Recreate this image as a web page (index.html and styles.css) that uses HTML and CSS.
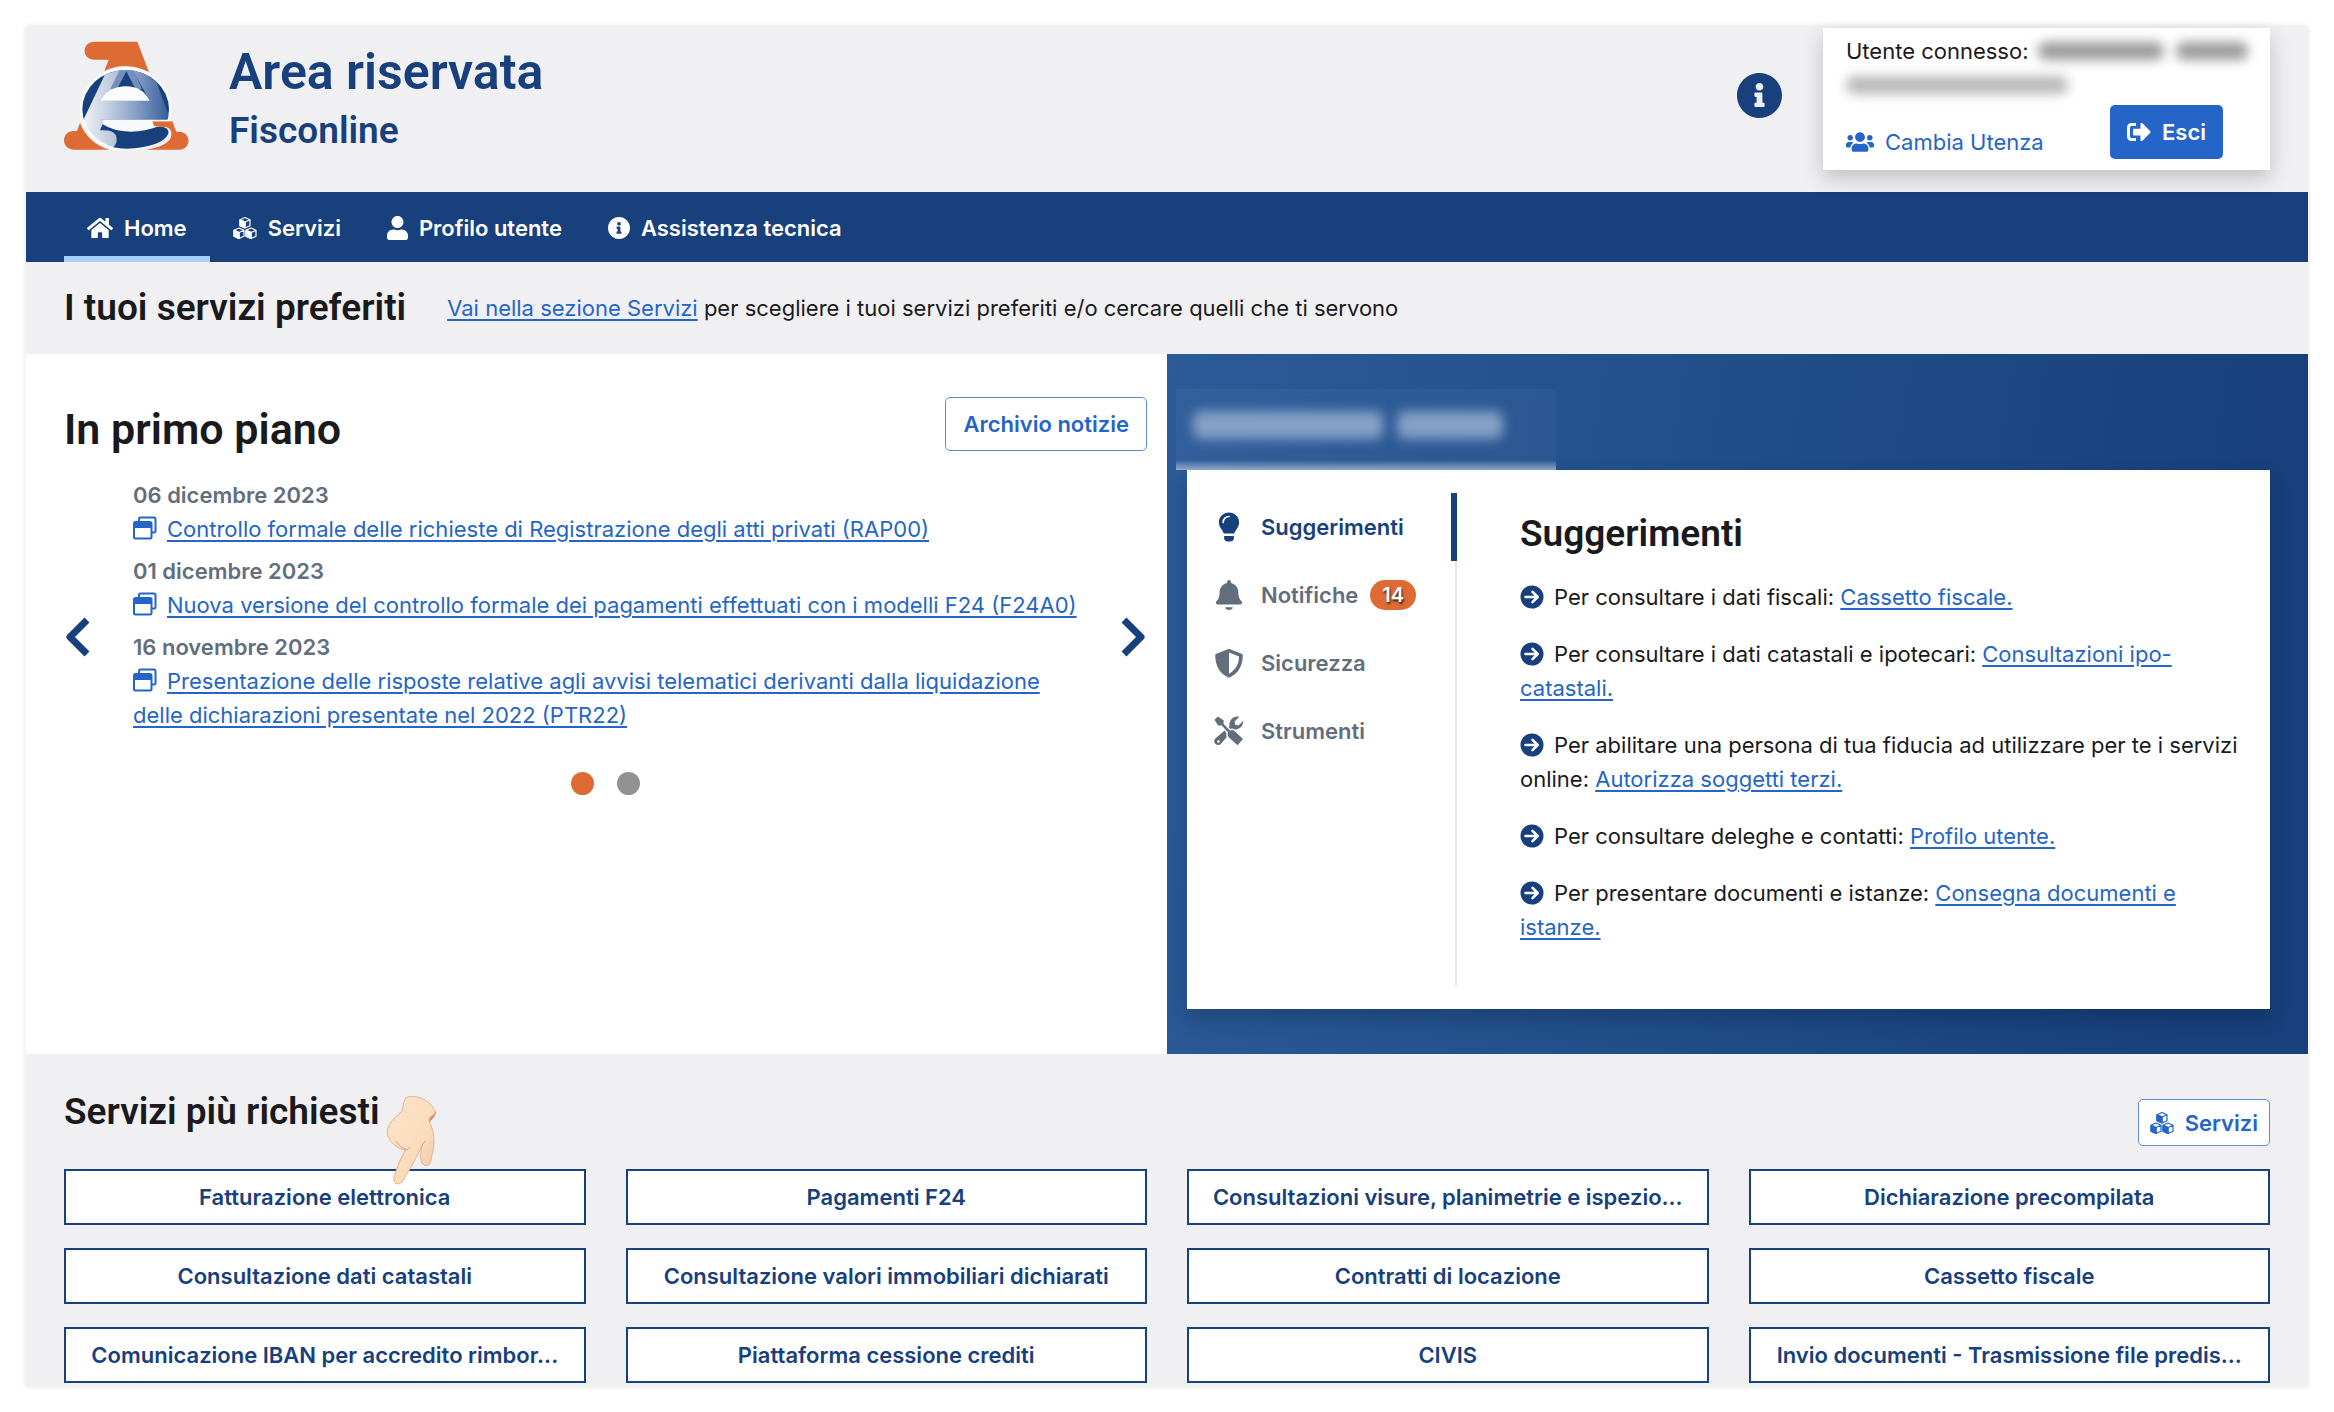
FILE: index.html
```html
<!DOCTYPE html>
<html lang="it">
<head>
<meta charset="utf-8">
<meta name="viewport" content="width=device-width, initial-scale=1">
<title>Area riservata - Fisconline</title>
<link rel="stylesheet" href="styles.css">
</head>
<body>
<svg class="sprite" aria-hidden="true">
  <symbol id="i-home" viewBox="0 0 576 512"><path d="M280.37 148.26L96 300.11V464a16 16 0 0 0 16 16l112.06-.29a16 16 0 0 0 15.92-16V368a16 16 0 0 1 16-16h64a16 16 0 0 1 16 16v95.64a16 16 0 0 0 16 16.05L464 480a16 16 0 0 0 16-16V300L295.67 148.26a12.19 12.19 0 0 0-15.3 0zM571.6 251.47L488 182.56V44.05a12 12 0 0 0-12-12h-56a12 12 0 0 0-12 12v72.61L318.47 43a48 48 0 0 0-61 0L4.34 251.47a12 12 0 0 0-1.6 16.9l25.5 31A12 12 0 0 0 45.15 301l235.22-193.74a12.19 12.19 0 0 1 15.3 0L530.9 301a12 12 0 0 0 16.9-1.6l25.5-31a12 12 0 0 0-1.7-16.93z"/></symbol>
  <symbol id="i-cubes" viewBox="0 0 48 46">
    <g id="cube" stroke="currentColor" stroke-width="2.4" stroke-linejoin="round">
      <path fill="none" d="M24 2l10 4.500v12l-10 4.500-10-4.500v-12zM14 6.500l10 4.500 10-4.500M24 11v12"/><path d="M14 6.500l10 4.500v12l-10-4.500z"/>
    </g>
    <use href="#cube" x="-12" y="21"/><use href="#cube" x="12" y="21"/>
  </symbol>
  <symbol id="i-user" viewBox="0 0 448 512"><path d="M224 256c70.7 0 128-57.3 128-128S294.7 0 224 0 96 57.3 96 128s57.3 128 128 128zm89.6 32h-16.7c-22.2 10.2-46.9 16-72.9 16s-50.6-5.8-72.9-16h-16.7C60.2 288 0 348.2 0 422.4V464c0 26.5 21.5 48 48 48h352c26.5 0 48-21.5 48-48v-41.6c0-74.2-60.2-134.4-134.4-134.4z"/></symbol>
  <symbol id="i-info" viewBox="8 8 496 496"><path d="M256 8C119.043 8 8 119.083 8 256c0 136.997 111.043 248 248 248s248-111.003 248-248C504 119.083 392.957 8 256 8zm0 110c23.196 0 42 18.804 42 42s-18.804 42-42 42-42-18.804-42-42 18.804-42 42-42zm56 254c0 6.627-5.373 12-12 12h-88c-6.627 0-12-5.373-12-12v-24c0-6.627 5.373-12 12-12h12v-64h-12c-6.627 0-12-5.373-12-12v-24c0-6.627 5.373-12 12-12h64c6.627 0 12 5.373 12 12v100h12c6.627 0 12 5.373 12 12v24z"/></symbol>
  <symbol id="i-users" viewBox="0 0 640 512"><path d="M96 224c35.3 0 64-28.7 64-64s-28.7-64-64-64-64 28.7-64 64 28.7 64 64 64zm448 0c35.3 0 64-28.7 64-64s-28.7-64-64-64-64 28.7-64 64 28.7 64 64 64zm32 32h-64c-17.6 0-33.5 7.1-45.1 18.6 40.3 22.1 68.9 62 75.1 109.4h66c17.7 0 32-14.3 32-32v-32c0-35.3-28.7-64-64-64zm-256 0c61.9 0 112-50.1 112-112S381.9 32 320 32 208 82.1 208 144s50.1 112 112 112zm76.8 32h-8.3c-20.8 10-43.9 16-68.5 16s-47.6-6-68.5-16h-8.3C179.6 288 128 339.6 128 403.2V432c0 26.5 21.5 48 48 48h288c26.5 0 48-21.5 48-48v-28.8c0-63.6-51.6-115.2-115.2-115.2zm-223.7-13.4C161.5 263.1 145.6 256 128 256H64c-35.3 0-64 28.7-64 64v32c0 17.7 14.3 32 32 32h65.9c6.3-47.4 34.9-87.3 75.2-109.4z"/></symbol>
  <symbol id="i-exit" viewBox="0 0 512 512"><path d="M497 273L329 441c-15 15-41 4.5-41-17v-96H152c-13.3 0-24-10.7-24-24v-96c0-13.3 10.7-24 24-24h136V88c0-21.4 25.900-32 41-17l168 168c9.300 9.400 9.300 24.600 0 34zM192 436v-40c0-6.600-5.400-12-12-12H96c-17.700 0-32-14.300-32-32V160c0-17.700 14.300-32 32-32h84c6.600 0 12-5.400 12-12V76c0-6.600-5.400-12-12-12H96c-53 0-96 43-96 96v192c0 53 43 96 96 96h84c6.600 0 12-5.400 12-12z"/></symbol>
  <symbol id="i-window" viewBox="0 0 24 24"><path fill="none" stroke="currentColor" stroke-width="2" stroke-linejoin="round" d="M6 5V3a1.500 1.500 0 0 1 1.500-1.500H21A1.500 1.500 0 0 1 22.500 3v12a1.500 1.500 0 0 1-1.500 1.500h-2M2.500 6H17a1.500 1.500 0 0 1 1.500 1.500V21a1.500 1.500 0 0 1-1.500 1.500H2.500A1.500 1.500 0 0 1 1 21V7.500A1.500 1.500 0 0 1 2.500 6z"/><path d="M1 6h17.500v6H1z"/></symbol>
  <symbol id="i-arrow" viewBox="0 0 24 24"><circle cx="12" cy="12" r="11.500"/><path fill="none" stroke="#fff" stroke-width="2.600" stroke-linecap="round" stroke-linejoin="round" d="M5.500 12h12M12.500 6.800l5.200 5.200-5.200 5.200"/></symbol>
  <symbol id="i-bulb" viewBox="0 0 32 32"><path d="M16 .5C9.800.5 5.200 5.200 5.200 11c0 3 1.200 5.200 2.800 7.400 1.200 1.700 2 3 2.300 4.600h11.400c.3-1.600 1.100-2.900 2.300-4.600 1.600-2.200 2.800-4.400 2.800-7.400C26.800 5.200 22.200.5 16 .5zM10.800 25.500h10.400v2a4 4 0 0 1-4 4h-2.400a4 4 0 0 1-4-4z"/><path fill="none" stroke="#fff" stroke-width="1.800" stroke-linecap="round" d="M9.800 11a6.200 6.200 0 0 1 6.200-6.200"/></symbol>
  <symbol id="i-bell" viewBox="0 0 448 512"><path d="M224 512c35.320 0 63.970-20 63.970-48H160.030c0 28 28.650 48 63.970 48zm215.390-149.710c-19.320-20.760-55.470-51.990-55.470-154.290 0-77.700-54.480-139.900-127.940-155.160V32c0-17.670-14.320-32-31.980-32s-31.980 14.330-31.980 32v20.840C118.560 68.100 64.080 130.300 64.080 208c0 102.300-36.150 133.530-55.470 154.290-6 6.450-8.660 14.160-8.610 21.710.110 16.400 12.980 32 32.100 32h383.800c19.120 0 32-15.600 32.100-32 .050-7.550-2.610-15.270-8.610-21.710z"/></symbol>
  <symbol id="i-shield" viewBox="0 0 32 32"><path fill-rule="evenodd" d="M16 .8l13.400 5.400c.8.300 1.300 1 1.300 1.900C30.700 18.500 26 27.500 16.800 31.400a2 2 0 0 1-1.600 0C6 27.500 1.300 18.500 1.300 8.100c0-.9.500-1.600 1.300-1.900zM16 4.800v22.600c6.400-3.200 10.500-9.700 10.700-18.300z"/></symbol>
  <symbol id="i-tools" viewBox="0 0 32 32">
    <path d="M27 .8l-5 5 .6 3.600 3.600.6 5-5A8.600 8.600 0 0 1 20.500 14L8 29a4.200 4.200 0 1 1-6-5.600L16.600 11A8.600 8.600 0 0 1 27 .8z"/>
    <path stroke="#fff" stroke-width="1.600" d="M-.5 4L4-.5l7 4.500v4.200l6.400 6.400c2-.8 3.800-.4 5.400 1.200l9.200 8.800-6.800 7.600-9.800-8.800c-1.600-1.600-2-3.600-1.200-5.600L8 11H4z"/>
    <circle cx="4.800" cy="27.200" r="1.300" fill="#fff"/>
  </symbol>
</svg>

<div class="page">
  <header class="header">
    <a class="logo" href="#" aria-label="Agenzia delle Entrate">
      <svg viewBox="42 32 375 328" aria-hidden="true">
        <defs>
          <linearGradient id="leg"><stop offset="0" stop-color="#f4f6fa"/><stop offset=".55" stop-color="#c3cee0"/><stop offset="1" stop-color="#93a9cb"/></linearGradient>
          <linearGradient id="bar"><stop offset="0" stop-color="#dce3ee"/><stop offset=".5" stop-color="#8da3c8"/><stop offset="1" stop-color="#315b98"/></linearGradient>
          <clipPath id="disc"><ellipse cx="227" cy="237" rx="130" ry="118"/></clipPath>
        </defs>
        <g fill="#dd6b33">
          <path d="M262 34H134C94 34 94 88 134 88h42l-13 34q65-32 134 3z"/>
          <path d="M90 278l-9 24h-9c-40 0-40 56 0 56h106Q115 340 90 278z"/>
        </g>
        <ellipse cx="227" cy="237" rx="137" ry="126" fill="#fbfcfd"/>
        <path fill="#dd6b33" d="M306 273h61l12 31h8c38 0 38 54 0 54H288q62-10 74-35 8-25-12-32l-38-3z"/>
        <g clip-path="url(#disc)">
          <path fill="#17407c" d="M90 110h275v158H90z"/>
          <path fill="url(#bar)" d="M243 110h60l58 158H140v-58h158z"/>
          <path fill="url(#leg)" d="M166 130l20-20h60l-46 70-40 32h-8v56h10l-4 32q46 0 46 34 0 14-14 24H90V290z"/>
          <path fill="#7390bd" d="M214 110h32l30 66-95 0z"/>
          <path fill="#17407c" d="M229 123l26 50h-52z"/>
        </g>
        <path fill="#fbfcfd" d="M152 211q24-43 76-43 50 0 71 43z"/>
        <path fill="#f7f8fa" d="M160 268h200v5h-54l8 18q-40 14-76 14-30 0-50-12-16-7-28-7z"/>
        <path fill="#17407c" d="M150 300l8-18q34 22 84 22 46-2 78-14 38-4 35 20-18 40-127 45-18 0-38-4 12-12 10-24 0-30-50-27z"/>
      </svg>
    </a>
    <div class="titles">
      <h1 class="site-title">Area riservata</h1>
      <p class="site-sub">Fisconline</p>
    </div>
    <button class="info-btn" type="button" aria-label="Informazioni"><svg class="icon"><use href="#i-info"/></svg></button>
    <section class="user-card" aria-label="Utente">
      <p class="user-line">Utente connesso: <span class="redacted redacted-name"></span><span class="redacted redacted-last"></span></p>
      <p class="user-line"><span class="redacted redacted-code"></span></p>
      <div class="user-actions">
        <a class="switch-user" href="#"><svg class="icon icon-wide"><use href="#i-users"/></svg>Cambia Utenza</a>
        <button class="btn btn-solid" type="button"><svg class="icon"><use href="#i-exit"/></svg>Esci</button>
      </div>
    </section>
  </header>

  <nav class="nav" aria-label="Principale">
    <a class="nav-item nav-active" href="#"><svg class="icon icon-home"><use href="#i-home"/></svg>Home</a>
    <a class="nav-item" href="#"><svg class="icon"><use href="#i-cubes"/></svg>Servizi</a>
    <a class="nav-item" href="#"><svg class="icon icon-user"><use href="#i-user"/></svg>Profilo utente</a>
    <a class="nav-item" href="#"><svg class="icon icon-info"><use href="#i-info"/></svg>Assistenza tecnica</a>
  </nav>

  <section class="favorites">
    <h2 class="heading">I tuoi servizi preferiti</h2>
    <p><a href="#">Vai nella sezione Servizi</a> per scegliere i tuoi servizi preferiti e/o cercare quelli che ti servono</p>
  </section>

  <main class="columns">
    <section class="news">
      <div class="news-head">
        <h2 class="heading heading-lg">In primo piano</h2>
        <a class="btn btn-outline" href="#">Archivio notizie</a>
      </div>
      <div class="carousel">
        <button class="arrow" type="button" aria-label="Precedente"><svg viewBox="0 0 28 42"><path d="M23 4L6 21l17 17"/></svg></button>
        <div class="slide">
          <ul class="news-list">
            <li><span class="date">06 dicembre 2023</span><a href="#"><svg class="icon"><use href="#i-window"/></svg>Controllo formale delle richieste di Registrazione degli atti privati (RAP00)</a></li>
            <li><span class="date">01 dicembre 2023</span><a href="#"><svg class="icon"><use href="#i-window"/></svg>Nuova versione del controllo formale dei pagamenti effettuati con i modelli F24 (F24A0)</a></li>
            <li><span class="date">16 novembre 2023</span><a href="#"><svg class="icon"><use href="#i-window"/></svg>Presentazione delle risposte relative agli avvisi telematici derivanti dalla liquidazione delle dichiarazioni presentate nel 2022 (PTR22)</a></li>
          </ul>
          <div class="dots">
            <button class="dot dot-on" type="button" aria-label="Pagina 1"></button>
            <button class="dot" type="button" aria-label="Pagina 2"></button>
          </div>
        </div>
        <button class="arrow" type="button" aria-label="Successiva"><svg viewBox="0 0 28 42"><path d="M5 4l17 17L5 38"/></svg></button>
      </div>
    </section>

    <section class="desk">
      <div class="desk-name"><span class="redacted redacted-title"></span><span class="redacted redacted-title redacted-title-last"></span></div>
      <div class="desk-card">
        <div class="tabs" role="tablist">
          <button class="tab tab-on" type="button" role="tab"><svg class="icon icon-tab"><use href="#i-bulb"/></svg>Suggerimenti</button>
          <button class="tab" type="button" role="tab"><svg class="icon icon-tab"><use href="#i-bell"/></svg>Notifiche<span class="badge">14</span></button>
          <button class="tab" type="button" role="tab"><svg class="icon icon-tab"><use href="#i-shield"/></svg>Sicurezza</button>
          <button class="tab" type="button" role="tab"><svg class="icon icon-tab"><use href="#i-tools"/></svg>Strumenti</button>
        </div>
        <div class="tips">
          <h2 class="heading">Suggerimenti</h2>
          <p><svg class="icon"><use href="#i-arrow"/></svg>Per consultare i dati fiscali: <a href="#">Cassetto fiscale.</a></p>
          <p><svg class="icon"><use href="#i-arrow"/></svg>Per consultare i dati catastali e ipotecari: <a href="#">Consultazioni ipo-catastali.</a></p>
          <p><svg class="icon"><use href="#i-arrow"/></svg>Per abilitare una persona di tua fiducia ad utilizzare per te i servizi online: <a href="#">Autorizza soggetti terzi.</a></p>
          <p><svg class="icon"><use href="#i-arrow"/></svg>Per consultare deleghe e contatti: <a href="#">Profilo utente.</a></p>
          <p><svg class="icon"><use href="#i-arrow"/></svg>Per presentare documenti e istanze: <a href="#">Consegna documenti e istanze.</a></p>
        </div>
      </div>
    </section>
  </main>

  <section class="services">
    <div class="services-head">
      <h2 class="heading services-title">Servizi più richiesti
        <svg class="hand" viewBox="0 0 270 360" aria-hidden="true">
          <defs><linearGradient id="skin" x1="0" y1="0" x2="1" y2="1"><stop offset="0" stop-color="#fde3c8"/><stop offset=".6" stop-color="#fbdcbd"/><stop offset="1" stop-color="#f0bf9b"/></linearGradient></defs>
          <path fill="url(#skin)" stroke="#e3b595" stroke-width="3" stroke-linejoin="round" d="M114 52q34-10 66 14 14 10 24 30-2 14-20 30 14 24 14 62-2 26-10 56-4 16-18 12-12-4-12-20l2-34q-14 30-30 58-16 26-28 46-10 10-20 4-8-8-2-24 12-42 32-76-24-4-38-20-18-18-16-38 4-28 44-58 4-30 12-42z"/>
          <path fill="none" stroke="#dd9f7c" stroke-width="3" stroke-linecap="round" d="M84 184q14 20 28 24M160 202q4-12 12-20M112 210q8 2 14-8"/>
          <path fill="#d9946f" d="M204 94q-2 16-20 32-4-8 2-14 12-8 18-18z"/>
        </svg>
      </h2>
      <a class="btn btn-outline btn-small" href="#"><svg class="icon"><use href="#i-cubes"/></svg>Servizi</a>
    </div>
    <div class="grid">
      <a class="tile" href="#">Fatturazione elettronica</a>
      <a class="tile" href="#">Pagamenti F24</a>
      <a class="tile" href="#">Consultazioni visure, planimetrie e ispezio...</a>
      <a class="tile" href="#">Dichiarazione precompilata</a>
      <a class="tile" href="#">Consultazione dati catastali</a>
      <a class="tile" href="#">Consultazione valori immobiliari dichiarati</a>
      <a class="tile" href="#">Contratti di locazione</a>
      <a class="tile" href="#">Cassetto fiscale</a>
      <a class="tile" href="#">Comunicazione IBAN per accredito rimbor...</a>
      <a class="tile" href="#">Piattaforma cessione crediti</a>
      <a class="tile" href="#">CIVIS</a>
      <a class="tile" href="#">Invio documenti - Trasmissione file predis...</a>
    </div>
  </section>
</div>
</body>
</html>
```
FILE: styles.css
```css
:root {
  --navy: #17407c;
  --link: #2565c7;
  --grey: #f0f0f2;
  --ink: #1a1a1d;
  --muted: #636e7d;
  --orange: #dd6b33;
}

* { box-sizing: border-box; }

body {
  margin: 0;
  padding: 26px 26px 24px;
  background: #fff;
  color: var(--ink);
  font-family: Inter, "Liberation Sans", sans-serif;
  font-size: 22px;
  line-height: 34px;
}

h1, h2, p, ul { margin: 0; padding: 0; }
ul { list-style: none; }
button { font: inherit; color: inherit; background: none; border: 0; padding: 0; cursor: pointer; }
a { color: var(--link); text-underline-offset: 3px; }
.sprite { display: none; }

.page { box-shadow: 0 0 5px rgba(0, 0, 0, .12); }

.icon { width: 24px; height: 24px; fill: currentColor; flex: none; }
.icon-home { width: 26px; }
.icon-wide { width: 28px; }
.icon-user { width: 21px; }
.icon-info { width: 22px; height: 22px; }
.icon-tab { width: 32px; height: 30px; }

.heading {
  font-family: Roboto, "Noto Sans", sans-serif;
  font-size: 37px;
  line-height: 48px;
  font-weight: 600;
}
.heading-lg { font-size: 43px; }

/* Header */
.header {
  display: flex;
  align-items: flex-start;
  min-height: 166px;
  padding: 2px 38px 0;
  background: var(--grey);
}
.logo { width: 125px; margin: 13px 40px 0 0; }
.logo svg { display: block; width: 100%; }
.titles { color: var(--navy); font-family: Roboto, "Noto Sans", sans-serif; font-weight: 600; padding-top: 12px; }
.site-title { font-size: 50px; line-height: 64px; font-weight: 600; }
.site-sub { font-size: 37px; line-height: 54px; }
.info-btn { margin: 45px 41px 0 auto; color: var(--navy); }
.info-btn .icon { display: block; width: 45px; height: 45px; }
.user-card {
  width: 447px;
  padding: 6px 23px 11px;
  background: #fff;
  box-shadow: 0 8px 20px rgba(0, 0, 0, .2);
}
.user-line { display: flex; align-items: center; height: 34px; white-space: nowrap; }
.user-actions { display: flex; align-items: flex-end; justify-content: space-between; margin: 3px 24px 0 0; }
.switch-user { display: flex; align-items: center; gap: 11px; text-decoration: none; }

.redacted { display: block; flex: none; height: 18px; border-radius: 8px; background: #9a9a9c; filter: blur(6px); }
.redacted-name { width: 126px; margin-left: 9px; }
.redacted-last { width: 72px; margin-left: 12px; }
.redacted-code { width: 222px; background: #b8b8ba; }

/* Buttons */
.btn {
  display: flex;
  align-items: center;
  justify-content: center;
  gap: 11px;
  min-height: 54px;
  padding: 0 17px;
  border-radius: 5px;
  font-weight: 600;
  text-decoration: none;
}
.btn-solid { background: var(--link); color: #fff; }
.btn-outline { background: #fff; color: var(--link); border: 1px solid #5f8dd2; }
.btn-small { min-height: 47px; padding: 0 11px; }

/* Navigation */
.nav { display: flex; height: 70px; padding: 0 38px; background: var(--navy); }
.nav-item {
  display: flex;
  align-items: center;
  gap: 11px;
  padding: 8px 23px 0;
  border-bottom: 6px solid transparent;
  color: #fff;
  font-weight: 600;
  text-decoration: none;
}
.nav-active { border-bottom-color: #a3d0fb; }

.favorites { display: flex; align-items: center; gap: 41px; min-height: 92px; padding: 0 38px; background: var(--grey); }

/* Two columns */
.columns { display: grid; grid-template-columns: 1fr 1fr; min-height: 700px; }
.news { padding: 43px 20px 0 38px; background: #fff; }
.news-head { display: flex; justify-content: space-between; align-items: flex-start; min-height: 81px; }
.news-head .heading { padding-top: 8px; }
.carousel { display: flex; align-items: center; }
.arrow { flex: none; width: 28px; height: 42px; color: var(--navy); }
.arrow svg { display: block; width: 28px; height: 42px; fill: none; stroke: currentColor; stroke-width: 7px; stroke-linejoin: round; }
.slide { flex: 1; padding: 0 24px 0 41px; }
.news-list { display: flex; flex-direction: column; gap: 8px; }
.date { display: block; color: var(--muted); font-weight: 600; }
.news-list .icon { margin-right: 10px; vertical-align: -3px; }
.dots { display: flex; gap: 23px; justify-content: center; padding: 40px 17px 0 0; }
.dot { width: 23px; height: 23px; border-radius: 50%; background: #929294; }
.dot-on { background: var(--orange); }

.desk { padding: 35px 38px 45px 9px; background: linear-gradient(100deg, #2c5b99, #1f4d88 50%, #17407c 90%); }
.desk-name {
  display: flex;
  gap: 14px;
  align-items: center;
  width: 380px;
  height: 81px;
  padding: 0 0 10px 17px;
  background: linear-gradient(to top, rgba(255, 255, 255, .5), rgba(255, 255, 255, .03) 10px);
}
.redacted-title { width: 190px; height: 28px; background: #86a0c6; }
.redacted-title-last { width: 106px; }
.desk-card {
  display: flex;
  min-height: 539px;
  margin-left: 11px;
  padding: 23px;
  background: #fff;
  box-shadow: 0 10px 20px rgba(0, 0, 0, .2);
}
.tabs { display: flex; flex-direction: column; width: 247px; border-right: 2px solid #e6e6ea; }
.tab {
  display: flex;
  align-items: center;
  height: 68px;
  margin-right: -2px;
  padding-left: 3px;
  border-right: 6px solid transparent;
  color: var(--muted);
  font-weight: 600;
}
.tab .icon { margin-right: 16px; }
.tab-on { color: var(--navy); border-right-color: var(--navy); }
.badge {
  margin-left: 12px;
  padding: 0 12px;
  border-radius: 15px;
  background: var(--orange);
  color: #fff;
  font-size: 20px;
  line-height: 30px;
  text-shadow: 1px 2px 2px rgba(0, 0, 0, .7);
}
.tips { flex: 1; padding: 17px 0 0 63px; }
.tips .heading { margin-bottom: 22px; }
.tips p { margin-bottom: 23px; }
.tips .icon { margin-right: 10px; color: var(--navy); vertical-align: -4px; }

/* Most requested services */
.services { padding: 45px 38px 4px; background: var(--grey); }
.services-head { display: flex; align-items: flex-start; justify-content: space-between; min-height: 70px; }
.services-title { position: relative; margin-top: -11px; }
.hand { position: absolute; left: calc(100% - 12px); top: -8px; width: 90px; height: 120px; }
.grid { display: grid; grid-template-columns: repeat(4, 1fr); gap: 23px 40px; }
.tile {
  height: 56px;
  border: 2px solid var(--navy);
  padding: 0 16px;
  background: #fff;
  color: var(--navy);
  font-weight: 600;
  line-height: 52px;
  text-align: center;
  text-decoration: none;
  white-space: nowrap;
  overflow: hidden;
  text-overflow: ellipsis;
}
```
